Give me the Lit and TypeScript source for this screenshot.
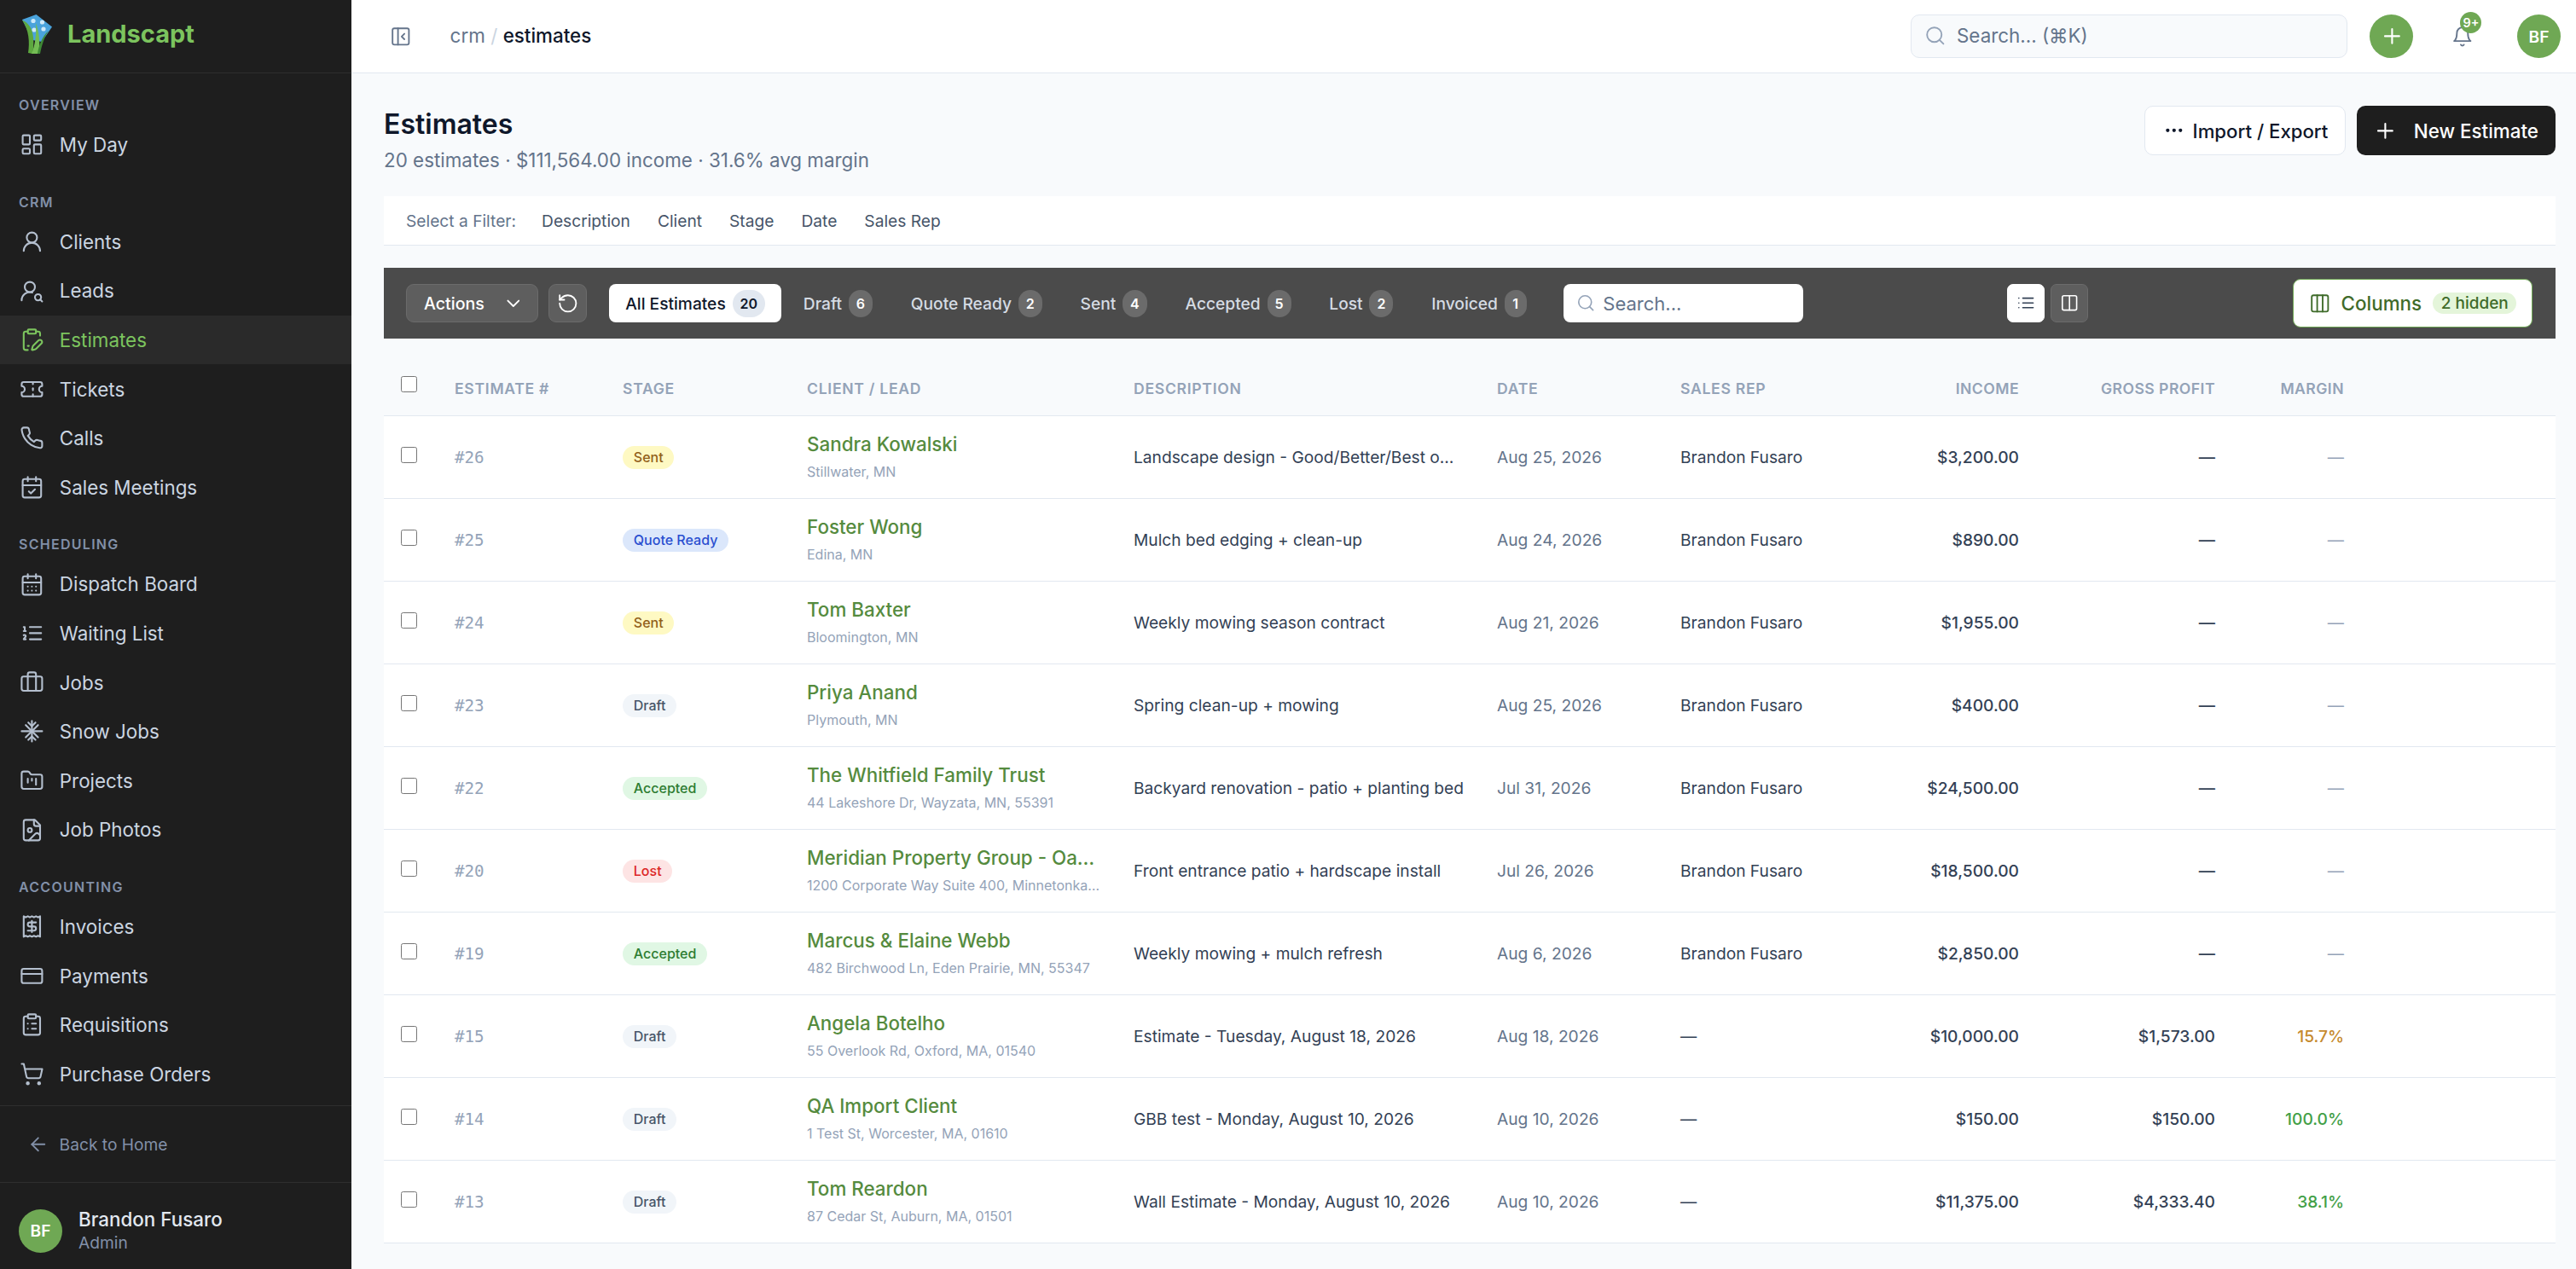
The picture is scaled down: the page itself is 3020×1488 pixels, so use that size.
import { LitElement, html, css, svg } from 'lit';
import { customElement } from 'lit/decorators.js';

// lucide style icon bodies
const icons: Record<string, unknown> = {
  dashboard: svg`<rect x="3" y="3" width="7" height="9" rx="1"/><rect x="14" y="3" width="7" height="5" rx="1"/><rect x="14" y="12" width="7" height="9" rx="1"/><rect x="3" y="16" width="7" height="5" rx="1"/>`,
  user: svg`<circle cx="12" cy="8" r="5"/><path d="M20 21a8 8 0 0 0-16 0"/>`,
  userSearch: svg`<circle cx="10" cy="8" r="5"/><path d="M2 21a8 8 0 0 1 10.434-7.62"/><circle cx="18" cy="18" r="3"/><path d="m22 22-1.9-1.9"/>`,
  clipboardPen: svg`<rect x="8" y="2" width="8" height="4" rx="1"/><path d="M16 4h2a2 2 0 0 1 2 2v2"/><path d="M21.34 15.664a1 1 0 1 0-3.004-3.004l-5.01 5.012a2 2 0 0 0-.506.854l-.837 2.87a.5.5 0 0 0 .62.62l2.87-.837a2 2 0 0 0 .854-.506z"/><path d="M8 22H6a2 2 0 0 1-2-2V6a2 2 0 0 1 2-2h2"/><path d="M8 18h1"/>`,
  ticket: svg`<path d="M2 9a3 3 0 0 1 0 6v2a2 2 0 0 0 2 2h16a2 2 0 0 0 2-2v-2a3 3 0 0 1 0-6V7a2 2 0 0 0-2-2H4a2 2 0 0 0-2 2Z"/><path d="M13 5v2"/><path d="M13 17v2"/><path d="M13 11v2"/>`,
  phone: svg`<path d="M22 16.92v3a2 2 0 0 1-2.18 2 19.79 19.79 0 0 1-8.63-3.07 19.5 19.5 0 0 1-6-6 19.79 19.79 0 0 1-3.07-8.67A2 2 0 0 1 4.11 2h3a2 2 0 0 1 2 1.72 12.84 12.84 0 0 0 .7 2.81 2 2 0 0 1-.45 2.11L8.09 9.91a16 16 0 0 0 6 6l1.27-1.27a2 2 0 0 1 2.11-.45 12.84 12.84 0 0 0 2.81.7A2 2 0 0 1 22 16.92z"/>`,
  calendarCheck: svg`<path d="M8 2v4"/><path d="M16 2v4"/><rect x="3" y="4" width="18" height="18" rx="2"/><path d="M3 10h18"/><path d="m9 16 2 2 4-4"/>`,
  calendarDays: svg`<path d="M8 2v4"/><path d="M16 2v4"/><rect x="3" y="4" width="18" height="18" rx="2"/><path d="M3 10h18"/><path d="M8 14h.01"/><path d="M12 14h.01"/><path d="M16 14h.01"/><path d="M8 18h.01"/><path d="M12 18h.01"/><path d="M16 18h.01"/>`,
  listOrdered: svg`<path d="M10 12h11"/><path d="M10 18h11"/><path d="M10 6h11"/><path d="M4 10h2"/><path d="M4 6h1v4"/><path d="M6 18H4c0-1 2-2 2-3s-1-1.5-2-1"/>`,
  briefcase: svg`<path d="M16 20V4a2 2 0 0 0-2-2h-4a2 2 0 0 0-2 2v16"/><rect x="2" y="6" width="20" height="14" rx="2"/>`,
  snowflake: svg`<path d="M2 12h20"/><path d="M12 2v20"/><path d="m15.5 3.5-3.5 3.5-3.5-3.5"/><path d="m8.5 20.5 3.5-3.5 3.5 3.5"/><path d="m6 6 12 12"/><path d="M18 6 6 18"/>`,
  folderKanban: svg`<path d="M4 20h16a2 2 0 0 0 2-2V8a2 2 0 0 0-2-2h-7.93a2 2 0 0 1-1.66-.9l-.82-1.2A2 2 0 0 0 7.93 3H4a2 2 0 0 0-2 2v13c0 1.1.9 2 2 2Z"/><path d="M8 10v4"/><path d="M12 10v2"/><path d="M16 10v6"/>`,
  fileImage: svg`<path d="M15 2H6a2 2 0 0 0-2 2v16a2 2 0 0 0 2 2h12a2 2 0 0 0 2-2V7Z"/><path d="M14 2v4a2 2 0 0 0 2 2h4"/><circle cx="10" cy="12" r="2"/><path d="m20 17-1.296-1.296a2.41 2.41 0 0 0-3.408 0L9 22"/>`,
  receipt: svg`<path d="M4 2v20l2-1 2 1 2-1 2 1 2-1 2 1 2-1 2 1V2l-2 1-2-1-2 1-2-1-2 1-2-1-2 1Z"/><path d="M16 8h-6a2 2 0 1 0 0 4h4a2 2 0 1 1 0 4H8"/><path d="M12 17.5v-11"/>`,
  card: svg`<rect x="2" y="5" width="20" height="14" rx="2"/><path d="M2 10h20"/>`,
  clipboardList: svg`<rect x="8" y="2" width="8" height="4" rx="1"/><path d="M16 4h2a2 2 0 0 1 2 2v14a2 2 0 0 1-2 2H6a2 2 0 0 1-2-2V6a2 2 0 0 1 2-2h2"/><path d="M12 11h4"/><path d="M12 16h4"/><path d="M8 11h.01"/><path d="M8 16h.01"/>`,
  cart: svg`<circle cx="8" cy="21" r="1"/><circle cx="19" cy="21" r="1"/><path d="M2.05 2.05h2l2.66 12.42a2 2 0 0 0 2 1.58h9.78a2 2 0 0 0 1.95-1.57l1.65-7.43H5.12"/>`,
  arrowLeft: svg`<path d="m12 19-7-7 7-7"/><path d="M19 12H5"/>`,
  panel: svg`<rect x="3" y="3" width="18" height="18" rx="2"/><path d="M9 3v18"/><path d="m16 15-3-3 3-3"/>`,
  search: svg`<circle cx="11" cy="11" r="8"/><path d="m21 21-4.3-4.3"/>`,
  plus: svg`<path d="M5 12h14"/><path d="M12 5v14"/>`,
  bell: svg`<path d="M6 8a6 6 0 0 1 12 0c0 7 3 9 3 9H3s3-2 3-9"/><path d="M10.3 21a1.94 1.94 0 0 0 3.4 0"/>`,
  more: svg`<circle cx="12" cy="12" r="1"/><circle cx="19" cy="12" r="1"/><circle cx="5" cy="12" r="1"/>`,
  chevron: svg`<path d="m6 9 6 6 6-6"/>`,
  rotate: svg`<path d="M3 12a9 9 0 1 0 9-9 9.75 9.75 0 0 0-6.74 2.74L3 8"/><path d="M3 3v5h5"/>`,
  list: svg`<path d="M3 12h.01"/><path d="M3 18h.01"/><path d="M3 6h.01"/><path d="M8 12h13"/><path d="M8 18h13"/><path d="M8 6h13"/>`,
  columns2: svg`<rect x="3" y="3" width="18" height="18" rx="2"/><path d="M12 3v18"/>`,
  columns3: svg`<rect x="3" y="3" width="18" height="18" rx="2"/><path d="M9 3v18"/><path d="M15 3v18"/>`,
};

const icon = (name: string, size: number, sw = 2) => html`<svg
  class="icon" width=${size} height=${size} viewBox="0 0 24 24" fill="none"
  stroke="currentColor" stroke-width=${sw} stroke-linecap="round" stroke-linejoin="round"
>${icons[name]}</svg>`;

const navSections = [
  { label: 'OVERVIEW', items: [['dashboard', 'My Day']] },
  { label: 'CRM', items: [['user', 'Clients'], ['userSearch', 'Leads'], ['clipboardPen', 'Estimates'], ['ticket', 'Tickets'], ['phone', 'Calls'], ['calendarCheck', 'Sales Meetings']] },
  { label: 'SCHEDULING', items: [['calendarDays', 'Dispatch Board'], ['listOrdered', 'Waiting List'], ['briefcase', 'Jobs'], ['snowflake', 'Snow Jobs'], ['folderKanban', 'Projects'], ['fileImage', 'Job Photos']] },
  { label: 'ACCOUNTING', items: [['receipt', 'Invoices'], ['card', 'Payments'], ['clipboardList', 'Requisitions'], ['cart', 'Purchase Orders']] },
];

const tabs = [
  ['All Estimates', '20'], ['Draft', '6'], ['Quote Ready', '2'], ['Sent', '4'],
  ['Accepted', '5'], ['Lost', '2'], ['Invoiced', '1'],
];

const rows = [
  ['#26', 'Sent', 'Sandra Kowalski', 'Stillwater, MN', 'Landscape design - Good/Better/Best o…', 'Aug 25, 2026', 'Brandon Fusaro', '$3,200.00', '—', '—', ''],
  ['#25', 'Quote Ready', 'Foster Wong', 'Edina, MN', 'Mulch bed edging + clean-up', 'Aug 24, 2026', 'Brandon Fusaro', '$890.00', '—', '—', ''],
  ['#24', 'Sent', 'Tom Baxter', 'Bloomington, MN', 'Weekly mowing season contract', 'Aug 21, 2026', 'Brandon Fusaro', '$1,955.00', '—', '—', ''],
  ['#23', 'Draft', 'Priya Anand', 'Plymouth, MN', 'Spring clean-up + mowing', 'Aug 25, 2026', 'Brandon Fusaro', '$400.00', '—', '—', ''],
  ['#22', 'Accepted', 'The Whitfield Family Trust', '44 Lakeshore Dr, Wayzata, MN, 55391', 'Backyard renovation - patio + planting bed', 'Jul 31, 2026', 'Brandon Fusaro', '$24,500.00', '—', '—', ''],
  ['#20', 'Lost', 'Meridian Property Group - Oa…', '1200 Corporate Way Suite 400, Minnetonka…', 'Front entrance patio + hardscape install', 'Jul 26, 2026', 'Brandon Fusaro', '$18,500.00', '—', '—', ''],
  ['#19', 'Accepted', 'Marcus & Elaine Webb', '482 Birchwood Ln, Eden Prairie, MN, 55347', 'Weekly mowing + mulch refresh', 'Aug 6, 2026', 'Brandon Fusaro', '$2,850.00', '—', '—', ''],
  ['#15', 'Draft', 'Angela Botelho', '55 Overlook Rd, Oxford, MA, 01540', 'Estimate - Tuesday, August 18, 2026', 'Aug 18, 2026', '—', '$10,000.00', '$1,573.00', '15.7%', 'warn'],
  ['#14', 'Draft', 'QA Import Client', '1 Test St, Worcester, MA, 01610', 'GBB test - Monday, August 10, 2026', 'Aug 10, 2026', '—', '$150.00', '$150.00', '100.0%', 'good'],
  ['#13', 'Draft', 'Tom Reardon', '87 Cedar St, Auburn, MA, 01501', 'Wall Estimate - Monday, August 10, 2026', 'Aug 10, 2026', '—', '$11,375.00', '$4,333.40', '38.1%', 'good'],
];

const stageClass: Record<string, string> = {
  Sent: 'sent', 'Quote Ready': 'quote', Draft: 'draft', Accepted: 'accepted', Lost: 'lost',
};

@customElement('app-root')
export class AppRoot extends LitElement {
  static styles = css`
    :host {
      display: block;
      width: 3020px;
      height: 1488px;
      overflow: hidden;
      font-family: Inter, 'Noto Sans', sans-serif;
      background: #f8fafc;
      color: #0f172a;
    }
    * { box-sizing: border-box; }
    .icon { display: block; flex: none; }
    .app { display: flex; height: 1488px; }

    .sidebar { width: 412px; flex: none; background: #1e1e1e; display: flex; flex-direction: column; }
    .brand { height: 86px; flex: none; display: flex; align-items: center; gap: 17px; padding: 0 0 6px 26px; border-bottom: 1px solid #2e2e2e; }
    .brand span { font-size: 29px; font-weight: 700; color: #7cc45e; }
    .nav { padding: 19px 0 8px; flex: none; }
    .section + .section { margin-top: 20px; }
    .section-label { height: 36px; display: flex; align-items: center; padding-left: 22px; font-size: 16px; font-weight: 600; letter-spacing: 1.28px; color: #8290a8; }
    .nav-item { height: 57.6px; display: flex; align-items: center; gap: 18px; padding-left: 23px; font-size: 22.4px; color: #cbd5e1; }
    .nav-item .icon { color: #b4bfce; }
    .nav-item.active { background: #2a2a2a; color: #7cc45e; }
    .nav-item.active .icon { color: #7cc45e; }
    .back { height: 91px; flex: none; display: flex; align-items: center; gap: 12px; padding-left: 32px; font-size: 19.2px; color: #8290a8; border-top: 1px solid #2e2e2e; border-bottom: 1px solid #2e2e2e; }
    .user { display: flex; align-items: center; gap: 19px; padding: 29px 0 0 22px; }
    .avatar { width: 51px; height: 51px; border-radius: 50%; background: #6fa854; color: #fff; display: flex; align-items: center; justify-content: center; font-size: 19.2px; font-weight: 600; flex: none; }
    .user-name { font-size: 22.4px; font-weight: 500; line-height: 28px; color: #e2e8f0; }
    .user-role { font-size: 19.2px; line-height: 26px; color: #8290a8; }

    .main { flex: 1; min-width: 0; display: flex; flex-direction: column; }
    .topbar { height: 86px; flex: none; background: #fff; border-bottom: 1px solid #e2e8f0; display: flex; align-items: center; padding: 0 18px 0 45px; }
    .topbar > .icon { color: #64748b; }
    .crumbs { margin: 0 0 3px 45px; font-size: 22.4px; display: flex; gap: 6.4px; color: #64748b; }
    .crumbs .sep { color: #cbd5e1; }
    .crumbs .here { color: #0f172a; font-weight: 500; }
    .global-search { margin-left: auto; width: 512px; height: 51px; border: 1px solid #e2e8f0; border-radius: 10px; background: #f8fafc; display: flex; align-items: center; gap: 12px; padding: 0 0 2px 15px; font-size: 22.4px; color: #64748b; }
    .global-search .icon { color: #94a3b8; }
    .round-add { width: 51px; height: 51px; border-radius: 50%; background: #6fa854; color: #fff; display: flex; align-items: center; justify-content: center; margin-left: 26px; }
    .bell { position: relative; margin: 0 51px 0 45px; color: #64748b; }
    .bell-count { position: absolute; top: -16px; left: 10px; width: 25px; height: 25px; border-radius: 50%; background: #6fa854; color: #fff; font-size: 14.4px; font-weight: 600; display: flex; align-items: center; justify-content: center; }

    .page { padding: 38px 24px 0 38px; }
    .page-head { display: flex; justify-content: space-between; align-items: flex-start; margin-bottom: 25px; }
    h1 { margin: 1px 0 0; font-size: 32px; line-height: 42px; font-weight: 600; color: #0f172a; }
    .subtitle { margin-top: 4px; font-size: 22.4px; line-height: 34px; color: #64748b; }
    .head-actions { display: flex; gap: 13px; }
    .btn { height: 58px; border-radius: 10px; display: flex; align-items: center; font-size: 22.2px; font-weight: 500; }
    .btn.light { width: 236px; background: #fff; border: 1px solid #e2e8f0; color: #0f172a; padding-left: 21px; gap: 9px; }
    .btn.dark { width: 233px; background: #1e1e1e; color: #fff; padding-left: 19px; gap: 19px; font-size: 22.4px; }

    .filter-bar { height: 58px; background: #fff; border-bottom: 1px solid #e2e8f0; display: flex; align-items: center; padding: 0 26px; font-size: 19.2px; color: #475569; gap: 32px; margin-bottom: 26px; }
    .filter-bar .lead { color: #64748b; margin-right: -2px; }

    .toolbar { height: 83px; background: #4b4b4b; display: flex; align-items: center; padding: 0 27px 0 26px; }
    .tool { height: 45px; border-radius: 9px; background: #5e5e5e; border: 1px solid #6b6b6b; color: #fff; display: flex; align-items: center; }
    .tool.actions { width: 155px; padding-left: 20px; gap: 21px; font-size: 19.6px; font-weight: 500; }
    .tool.refresh { width: 45px; margin-left: 12px; justify-content: center; }
    .tabs { display: flex; gap: 6.4px; margin-left: 26px; }
    .tab { height: 45px; padding: 0 19.2px; border-radius: 8px; display: flex; align-items: center; gap: 7.8px; font-size: 19.2px; font-weight: 500; color: #d5dbe3; }
    .tab b { height: 32px; min-width: 26px; padding: 0 9px; border-radius: 16px; background: #6b6b6b; color: #fff; font-size: 16px; font-weight: 600; display: flex; align-items: center; justify-content: center; }
    .tab.active { background: #fff; color: #0f172a; }
    .tab.active b { background: #e2e8f0; color: #0f172a; }
    .table-search { width: 281px; height: 45px; margin-left: 24px; border-radius: 8px; background: #fff; display: flex; align-items: center; gap: 9px; padding-left: 15px; font-size: 22px; color: #64748b; }
    .table-search .icon { color: #94a3b8; }
    .views { margin-left: auto; display: flex; gap: 7px; }
    .view { width: 44px; height: 45px; border-radius: 7px; display: flex; align-items: center; justify-content: center; background: #5e5e5e; border: 1px solid #6b6b6b; color: #fff; }
    .view.on { background: #fff; border-color: #fff; color: #334155; }
    .columns { margin-left: auto; width: 281px; height: 57px; border-radius: 9px; border: 1px solid #6fa854; background: #fff; color: #3f6b2a; display: flex; align-items: center; padding-left: 18px; font-size: 22.4px; font-weight: 500; }
    .columns span { margin-left: 12px; }
    .columns em { margin-left: 13px; height: 25px; padding: 0 9.6px; border-radius: 13px; background: #e4f5da; font-size: 19px; font-style: normal; display: flex; align-items: center; }

    .row { display: grid; grid-template-columns: 63px 197px 216px 383px 426px 215px 237px 200px 230px 151px 1fr; align-items: center; border-bottom: 1px solid #e2e8f0; padding: 0; }
    .row > div { padding: 0 20px; white-space: nowrap; min-width: 0; }
    .row.head { height: 91px; padding-top: 26px; font-size: 17.6px; font-weight: 600; letter-spacing: 0.7px; color: #94a3b8; }
    .row.head input { margin-bottom: 10px; }
    .row.head .right { letter-spacing: 0.45px; }
    .row.body { height: 97px; background: #fff; font-size: 19.2px; color: #334155; }
    input[type='checkbox'] { display: block; width: 19px; height: 19px; margin: 0 0 5px; }
    .right { text-align: right; }
    .row > .num { font-family: 'DejaVu Sans Mono', 'Liberation Mono', monospace; color: #94a3b8; }
    .badge { display: inline-flex; align-items: center; height: 27px; padding: 0 12.8px; border-radius: 14px; font-size: 16px; font-weight: 500; }
    .badge.sent { background: #fef9c3; color: #92601a; }
    .badge.quote { background: #dbe7fb; color: #2a4fd0; }
    .badge.draft { background: #f1f5f9; color: #475569; }
    .badge.accepted { background: #e0f7e4; color: #2e7d32; }
    .badge.lost { background: #fde4e4; color: #dc2626; }
    .row > .who { padding-bottom: 4px; }
    .client { font-size: 22.4px; font-weight: 500; line-height: 32px; color: #558b3e; }
    .place { font-size: 16px; line-height: 22px; margin-top: 5px; color: #94a3b8; }
    .date { color: #64748b; }
    .money { font-weight: 500; }
    .muted { color: #94a3b8; }
    .warn { color: #c68a2e; font-weight: 500; }
    .good { color: #43a047; font-weight: 500; }
  `;

  private logo() {
    return html`<svg width="36" height="46" viewBox="0 0 36 46" style="flex:none">
      <path d="M16.5 0 0 6 12 30 23 32 35 14.5Z" fill="#4aa3dc" />
      <g fill="#cfe9f8">
        <circle cx="13" cy="7.5" r="2.6" /><circle cx="23.5" cy="9" r="2.6" />
        <circle cx="14" cy="18" r="2.6" /><circle cx="25" cy="17" r="2.6" />
      </g>
      <path d="M0 6.5C8 10 12 17 13 27 13.5 33 13.5 40 12 46L7 45C9 33 8 18 0 6.5Z" fill="#5da83f" />
      <path d="M16 10C20 20 21 34 20 46L11 46C15 36 17 24 16 10Z" fill="#74bd54" />
      <path d="M31 19C26 26 23 36 21 46L18 46C19 38 23 26 31 19Z" fill="#3e8a34" />
    </svg>`;
  }

  private sidebar() {
    return html`<aside class="sidebar">
      <div class="brand">${this.logo()}<span>Landscapt</span></div>
      <nav class="nav">
        ${navSections.map((s) => html`<div class="section">
          <div class="section-label">${s.label}</div>
          ${s.items.map(([ic, label]) => html`<div class="nav-item ${label === 'Estimates' ? 'active' : ''}">
            ${icon(ic, 28.8, 1.75)}<span>${label}</span>
          </div>`)}
        </div>`)}
      </nav>
      <div class="back">${icon('arrowLeft', 25.6, 1.75)}<span>Back to Home</span></div>
      <div class="user">
        <div class="avatar">BF</div>
        <div>
          <div class="user-name">Brandon Fusaro</div>
          <div class="user-role">Admin</div>
        </div>
      </div>
    </aside>`;
  }

  private topbar() {
    return html`<header class="topbar">
      ${icon('panel', 25.6, 1.75)}
      <div class="crumbs"><span>crm</span><span class="sep">/</span><span class="here">estimates</span></div>
      <div class="global-search">${icon('search', 25.6, 1.75)}<span>Search... (⌘K)</span></div>
      <div class="round-add">${icon('plus', 28.8, 1.75)}</div>
      <div class="bell">${icon('bell', 25.6, 1.75)}<span class="bell-count">9+</span></div>
      <div class="avatar">BF</div>
    </header>`;
  }

  private toolbar() {
    return html`<div class="toolbar">
      <div class="tool actions"><span>Actions</span>${icon('chevron', 25.6, 1.75)}</div>
      <div class="tool refresh">${icon('rotate', 25.6, 1.75)}</div>
      <div class="tabs">
        ${tabs.map(([label, n], i) => html`<div class="tab ${i === 0 ? 'active' : ''}"><span>${label}</span><b>${n}</b></div>`)}
      </div>
      <div class="table-search">${icon('search', 22.4, 1.75)}<span>Search...</span></div>
      <div class="views">
        <div class="view on">${icon('list', 22.4, 1.75)}</div>
        <div class="view">${icon('columns2', 22.4, 1.75)}</div>
      </div>
      <div class="columns">${icon('columns3', 25.6, 1.75)}<span>Columns</span><em>2 hidden</em></div>
    </div>`;
  }

  private table() {
    return html`<div class="table">
      <div class="row head">
        <div><input type="checkbox" /></div>
        <div>ESTIMATE #</div><div>STAGE</div><div>CLIENT / LEAD</div><div>DESCRIPTION</div>
        <div>DATE</div><div>SALES REP</div>
        <div class="right">INCOME</div><div class="right">GROSS PROFIT</div><div class="right">MARGIN</div><div></div>
      </div>
      ${rows.map((r) => html`<div class="row body">
        <div><input type="checkbox" /></div>
        <div class="num">${r[0]}</div>
        <div><span class="badge ${stageClass[r[1]]}">${r[1]}</span></div>
        <div class="who"><div class="client">${r[2]}</div><div class="place">${r[3]}</div></div>
        <div>${r[4]}</div>
        <div class="date">${r[5]}</div>
        <div>${r[6]}</div>
        <div class="right money">${r[7]}</div>
        <div class="right money">${r[8]}</div>
        <div class="right ${r[10] || 'muted'}">${r[9]}</div>
        <div></div>
      </div>`)}
    </div>`;
  }

  render() {
    return html`<div class="app">
      ${this.sidebar()}
      <div class="main">
        ${this.topbar()}
        <div class="page">
          <div class="page-head">
            <div>
              <h1>Estimates</h1>
              <div class="subtitle">20 estimates · $111,564.00 income · 31.6% avg margin</div>
            </div>
            <div class="head-actions">
              <div class="btn light">${icon('more', 25.6, 2)}<span>Import / Export</span></div>
              <div class="btn dark">${icon('plus', 28.8, 1.75)}<span>New Estimate</span></div>
            </div>
          </div>
          <div class="filter-bar">
            <span class="lead">Select a Filter:</span>
            <span>Description</span><span>Client</span><span>Stage</span><span>Date</span><span>Sales Rep</span>
          </div>
          ${this.toolbar()}
          ${this.table()}
        </div>
      </div>
    </div>`;
  }
}
